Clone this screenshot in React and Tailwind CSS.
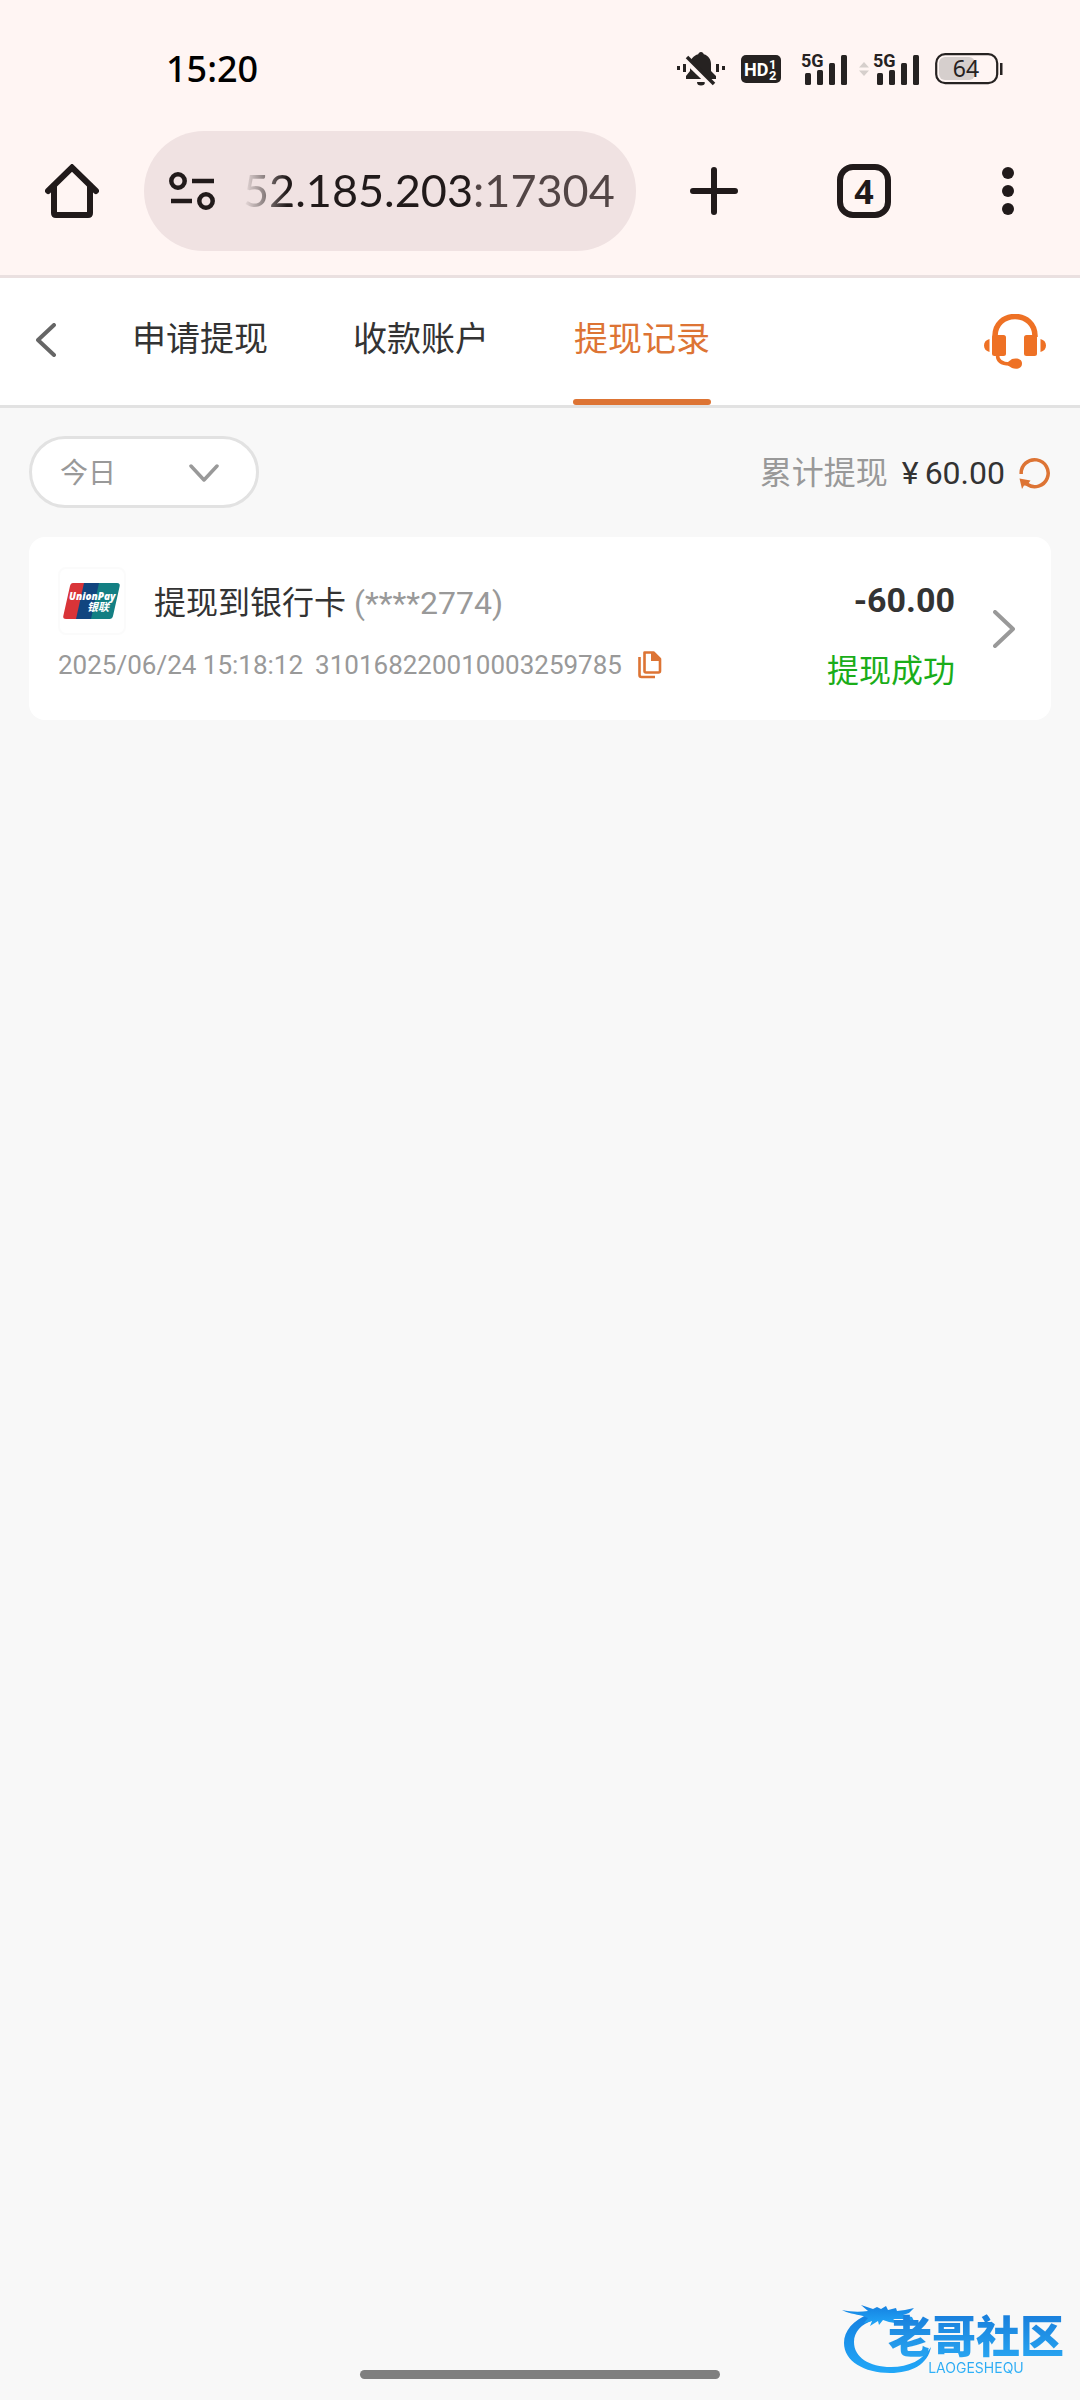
// src/App.jsx
import React, { useState } from 'react';

const TABS = ['申请提现', '收款账户', '提现记录'];

const RECORDS = [
  {
    id: '310168220010003259785',
    title: '提现到银行卡',
    card: '(****2774)',
    time: '2025/06/24 15:18:12',
    amount: '-60.00',
    status: '提现成功',
  },
];

const BellOffIcon = () => (
  <svg width="48" height="34" viewBox="0 0 48 34" fill="#262221">
    <rect x="0" y="14" width="3" height="4" />
    <rect x="6" y="12" width="3" height="8" />
    <rect x="39" y="12" width="3" height="8" />
    <rect x="45" y="14" width="3" height="4" />
    <path d="M24 0c1.500 0 2.500 1 2.800 2.300C31.500 3.600 34 7.500 34 12v7l5 5v3H9v-3l4-5v-7c0-4.500 3.500-8.400 8.200-9.700C21.500 1 22.500 0 24 0z" />
    <path d="M20 30h8a4 3.500 0 0 1-8 0z" />
    <path d="M7.500 7.500L35 34" stroke="#fff5f3" strokeWidth="5" />
    <path d="M10 5L37 32" stroke="#262221" strokeWidth="3.500" />
  </svg>
);

const HdIcon = () => (
  <svg width="40" height="28" viewBox="0 0 40 28" className="font-[Roboto]">
    <rect width="40" height="28" rx="5" fill="#262221" />
    <text x="3" y="21" fontSize="18" fontWeight="700" fill="#fff">HD</text>
    <text x="28" y="14" fontSize="13" fontWeight="700" fill="#fff">1</text>
    <text x="28" y="25" fontSize="13" fontWeight="700" fill="#fff">2</text>
  </svg>
);

const SignalIcon = () => (
  <svg width="46" height="36" viewBox="0 -4 46 36" className="mb-1 font-[Roboto]">
    <g fill="#262221">
      <rect x="4" y="20" width="6" height="12" rx="1.500" />
      <rect x="16" y="17" width="6" height="15" rx="1.500" />
      <rect x="28" y="10" width="6" height="22" rx="1.500" />
      <rect x="40" y="2" width="6" height="30" rx="1.500" />
    </g>
    <text x="0" y="14" fontSize="18" fontWeight="700" fill="#262221" stroke="#fff5f3" strokeWidth="2" paintOrder="stroke">5G</text>
  </svg>
);

const DataArrowsIcon = () => (
  <svg width="10" height="14" viewBox="0 0 10 14" fill="#d6cfcc">
    <path d="M5 0l5 5.500H0zM5 14l5-5.500H0z" />
  </svg>
);

const BatteryIcon = () => (
  <svg width="68" height="32" viewBox="0 0 68 32" className="font-[Noto_Sans]">
    <rect x="4" y="4" width="36" height="23" rx="6" fill="#d6cfcd" />
    <rect x="1.200" y="1.200" width="61" height="29" rx="9" fill="none" stroke="#262221" strokeWidth="2.200" />
    <rect x="65" y="10" width="2.500" height="12" fill="#262221" />
    <text x="31" y="24" fontSize="23" textAnchor="middle" fill="#262221">64</text>
  </svg>
);

const HomeIcon = () => (
  <svg width="54" height="54" viewBox="0 0 54 54" fill="none" stroke="#211a1a" strokeWidth="6" strokeLinecap="round" strokeLinejoin="round">
    <path d="M3 27L27 3.500 51 27" strokeLinejoin="miter" />
    <path d="M9 22v27q0 2 2 2h32q2 0 2-2V22" />
  </svg>
);

const SiteSettingsIcon = () => (
  <svg width="46" height="38" viewBox="0 0 46 38" fill="none" stroke="#211a1a" strokeWidth="4.500">
    <circle cx="9" cy="9" r="6.700" />
    <path d="M23 9h22M2 29h21" />
    <circle cx="37" cy="29" r="6.700" />
  </svg>
);

const PlusIcon = () => (
  <svg width="48" height="48" viewBox="0 0 48 48" stroke="#211a1a" strokeWidth="6" strokeLinecap="round">
    <path d="M24 3v42M3 24h42" />
  </svg>
);

const DotsIcon = () => (
  <svg width="12" height="48" viewBox="0 0 12 48" fill="#211a1a">
    <circle cx="6" cy="6" r="6" />
    <circle cx="6" cy="24" r="6" />
    <circle cx="6" cy="42" r="6" />
  </svg>
);

const HeadsetIcon = () => (
  <svg width="62" height="56" viewBox="0 0 62 56" fill="#ee7125">
    <path d="M11 23v-1C11 10 20 2.500 31 2.500S51 10 51 22v1" fill="none" stroke="#ee7125" strokeWidth="5.500" />
    <rect x="8" y="21" width="14" height="21" rx="2.500" />
    <rect x="40" y="21" width="13" height="21" rx="2.500" />
    <path d="M5.500 25v13C2 37 0 35 0 31.500S2 26 5.500 25zM56.500 25v13c3.500-1 5.500-3 5.500-6.500S60 26 56.500 25z" />
    <path d="M13.500 41c0 6 4 9 12 9" fill="none" stroke="#ee7125" strokeWidth="3.500" />
    <path d="M24 48l4-3c3-1 10-1 10 4.500S32 55.500 28 54l-4-2.500z" />
  </svg>
);

const RefreshIcon = () => (
  <svg width="32" height="32" viewBox="0 0 32 32">
    <path d="M2.200 17A13.500 13.500 0 1 1 8 27.300" fill="none" stroke="#dd7434" strokeWidth="3.500" />
    <path d="M0.500 21.500L11.500 23.500 9 27l1 2-5-0.500-2 3.500z" fill="#dd7434" />
  </svg>
);

const CopyIcon = () => (
  <svg width="24" height="28" viewBox="0 0 24 28" fill="none" stroke="#dd7434" strokeWidth="2.600">
    <path d="M6.500 1.500h9L22 8v12q0 1.500-1.500 1.500H8q-1.500 0-1.500-1.500z" strokeLinejoin="round" />
    <path d="M13 1v9h9V8l-6-7z" fill="#dd7434" stroke="none" />
    <path d="M1.500 6v18q0 2 2 2H17" />
  </svg>
);

const UnionPayLogo = () => (
  <svg width="58" height="36" viewBox="0 0 58 36" className="font-[Open_Sans,Noto_Sans_CJK_SC]">
    <path d="M10 0h14L15 36H3q-3.500 0-2.600-3.500L7 3q.7-3 3-3z" fill="#d93438" />
    <path d="M21 0h17l-8 36H13z" fill="#11457f" />
    <path d="M36 0h18q3.500 0 2.600 3.500L50 33q-.7 3-3.500 3H28z" fill="#137f83" />
    <text x="6" y="17" fontSize="10" fontWeight="800" fontStyle="italic" fill="#fff">UnionPay</text>
    <text x="24" y="28" fontSize="11" fontWeight="700" fontStyle="italic" fill="#fff">银联</text>
  </svg>
);

const DragonMark = () => (
  <svg width="94" height="78" viewBox="0 0 94 78">
    <defs>
      <linearGradient id="dragon" x1="0" y1="0" x2="0" y2="1">
        <stop offset="0%" stopColor="#1580e0" />
        <stop offset="100%" stopColor="#22a8f8" />
      </linearGradient>
    </defs>
    <g fill="url(#dragon)">
      <path d="M27 12C11 18 2 29 2 41c0 18 20 30 46 30 22 0 38-9 41-26-8 13-22 20-40 20-22 0-37-10-37-25 0-10 7-18 20-22l6-5z" />
      <path d="M0 8c9 2 18 2 26 1l-7-6 12 4 4-2 4 2 5-3 2 4 8-2 1 3 8-1 9-2-5 5-6 2 9 2 2 4-12-2-9 0 8 5-12-2-6-2-4 5-1-4-8 5 2-5-8 2 4-5-5-2C13 12 5 11 0 8z" />
    </g>
  </svg>
);

const StatusBar = () => (
  <div className="flex h-[50px] items-center justify-between pl-[166px] pr-[77px]">
    <span className="font-[Noto_Sans,sans-serif] text-[36px] font-medium leading-[50px] text-black">15:20</span>
    <div className="flex items-center">
      <span className="mr-4"><BellOffIcon /></span>
      <span className="mr-5"><HdIcon /></span>
      <span className="mr-3"><SignalIcon /></span>
      <span className="mr-1"><DataArrowsIcon /></span>
      <span className="mr-4"><SignalIcon /></span>
      <BatteryIcon />
    </div>
  </div>
);

const BrowserBar = () => {
  const [url, setUrl] = useState('52.185.203:17304');

  return (
    <div className="mt-[37px] flex h-[120px]">
      <button aria-label="Home" className="flex w-[144px] items-center justify-center">
        <HomeIcon />
      </button>
      <div className="flex min-w-0 flex-1 items-center rounded-full bg-[#f0e2e2] pl-[25px] pr-5">
        <button aria-label="Site settings" className="shrink-0">
          <SiteSettingsIcon />
        </button>
        <input
          aria-label="Address"
          value={url}
          onChange={(e) => setUrl(e.target.value)}
          className="ml-7 h-[60px] w-full min-w-0 bg-[linear-gradient(90deg,#f0e2e2_0px,#211a1a_44px,#211a1a_228px,#524545_229px)] bg-clip-text font-[Lato,sans-serif] text-[45px] text-transparent outline-none"
        />
      </div>
      <button aria-label="New tab" className="flex w-[156px] items-center justify-center">
        <PlusIcon />
      </button>
      <button aria-label="Open tabs" className="flex w-[144px] items-center justify-center">
        <span className="flex size-[54px] items-center justify-center rounded-2xl border-6 border-[#211a1a] font-[Noto_Sans,sans-serif] text-[34px] font-bold leading-none text-[#211a1a]">
          4
        </span>
      </button>
      <button aria-label="More" className="flex w-[144px] items-center justify-center">
        <DotsIcon />
      </button>
    </div>
  );
};

const NavTabs = () => {
  const [active, setActive] = useState(2);

  return (
    <nav className="flex h-[130px] items-stretch border-b-3 border-[#e2e2e2] bg-white pl-9 pr-[34px]">
      <button aria-label="Back" className="mr-[75px] pb-1">
        <svg width="20" height="34" viewBox="0 0 20 34" fill="none" stroke="#666" strokeWidth="4" strokeLinecap="round" strokeLinejoin="round">
          <path d="M18 2L2 17l16 15" />
        </svg>
      </button>
      <div className="flex flex-1 gap-[83px]">
        {TABS.map((tab, index) => (
          <button
            key={tab}
            onClick={() => setActive(index)}
            className={`flex w-[138px] flex-col items-center justify-between whitespace-nowrap text-[34px] ${
              index === active ? 'text-[#dd7434]' : 'text-[#333]'
            }`}
          >
            <span className="pt-[37px] leading-[48px]">{tab}</span>
            <span className={`h-1.5 w-full rounded-full ${index === active ? 'bg-[#dd7434]' : ''}`} />
          </button>
        ))}
      </div>
      <button aria-label="客服">
        <HeadsetIcon />
      </button>
    </nav>
  );
};

const FilterRow = () => (
  <div className="flex items-center justify-between">
    <div className="relative">
      <select
        aria-label="日期"
        className="h-[72px] w-[230px] appearance-none rounded-full border-3 border-[#e2e2e2] bg-white pl-7 pt-1 text-[28px] text-[#999] outline-none"
      >
        <option>今日</option>
        <option>昨日</option>
        <option>近七日</option>
      </select>
      <svg className="pointer-events-none absolute right-10 top-7" width="30" height="18" viewBox="0 0 30 18" fill="none" stroke="#999" strokeWidth="3.500" strokeLinecap="round" strokeLinejoin="round">
        <path d="M2 2l13 14L28 2" />
      </svg>
    </div>
    <div className="flex items-center pt-0.5 text-[32px] text-[#333]">
      <span className="mr-3.5 text-[#999]">累计提现</span>
      <span className="mr-1.5">¥</span>
      <span>60.00</span>
      <button aria-label="刷新" className="ml-3.5">
        <RefreshIcon />
      </button>
    </div>
  </div>
);

const RecordCard = ({ record }) => (
  <article className="flex h-[183px] items-center rounded-2xl bg-white pl-[29px] pr-9">
    <div className="flex-1 pb-1.5">
      <div className="flex h-[68px] items-center">
        <div className="mr-7 flex size-[68px] items-center justify-center rounded-lg border-2 border-[#fbfbfb]">
          <UnionPayLogo />
        </div>
        <h2 className="pt-1 text-[32px] text-[#333]">
          {record.title} <span className="text-[#999]">{record.card}</span>
        </h2>
      </div>
      <div className="mt-2.5 flex items-center text-[26px] leading-[40px] text-[#999]">
        <time className="mr-3">{record.time}</time>
        <span>{record.id}</span>
        <button aria-label="复制" className="ml-4">
          <CopyIcon />
        </button>
      </div>
    </div>
    <div className="mr-[38px] flex flex-col items-end pt-3">
      <strong className="text-[34px] font-bold leading-[48px] text-[#333]">{record.amount}</strong>
      <span className="mt-6 text-[32px] leading-[46px] text-[#1aad19]">{record.status}</span>
    </div>
    <button aria-label="详情">
      <svg width="22" height="38" viewBox="0 0 22 38" fill="none" stroke="#999" strokeWidth="4" strokeLinecap="round" strokeLinejoin="round">
        <path d="M2 2l18 17L2 36" />
      </svg>
    </button>
  </article>
);

const Watermark = () => (
  <div className="absolute bottom-5 right-4 flex items-start">
    <DragonMark />
    <div className="-ml-12 mt-3 flex flex-col items-center bg-linear-to-b from-[#1a7fdc] to-[#2fb2f8] bg-clip-text text-transparent">
      <span className="text-[44px] font-black leading-[48px]">老哥社区</span>
      <span className="font-[Inter] text-[14px] leading-3">LAOGESHEQU</span>
    </div>
  </div>
);

const App = () => {
  return (
    <div className="relative flex min-h-screen flex-col bg-[#f8f8f8] font-[Roboto,Noto_Sans_CJK_SC,sans-serif]">
      <header className="border-b-3 border-[#eae0e0] bg-[#fff5f3] pb-6 pt-11">
        <StatusBar />
        <BrowserBar />
      </header>
      <NavTabs />
      <main className="flex flex-col gap-[29px] px-[29px] pt-7">
        <FilterRow />
        {RECORDS.map((record) => (
          <RecordCard key={record.id} record={record} />
        ))}
      </main>
      <div className="mx-auto mb-[21px] mt-auto h-[9px] w-1/3 rounded-full bg-[#7f7f7f]" />
      <Watermark />
    </div>
  );
};

export default App;
